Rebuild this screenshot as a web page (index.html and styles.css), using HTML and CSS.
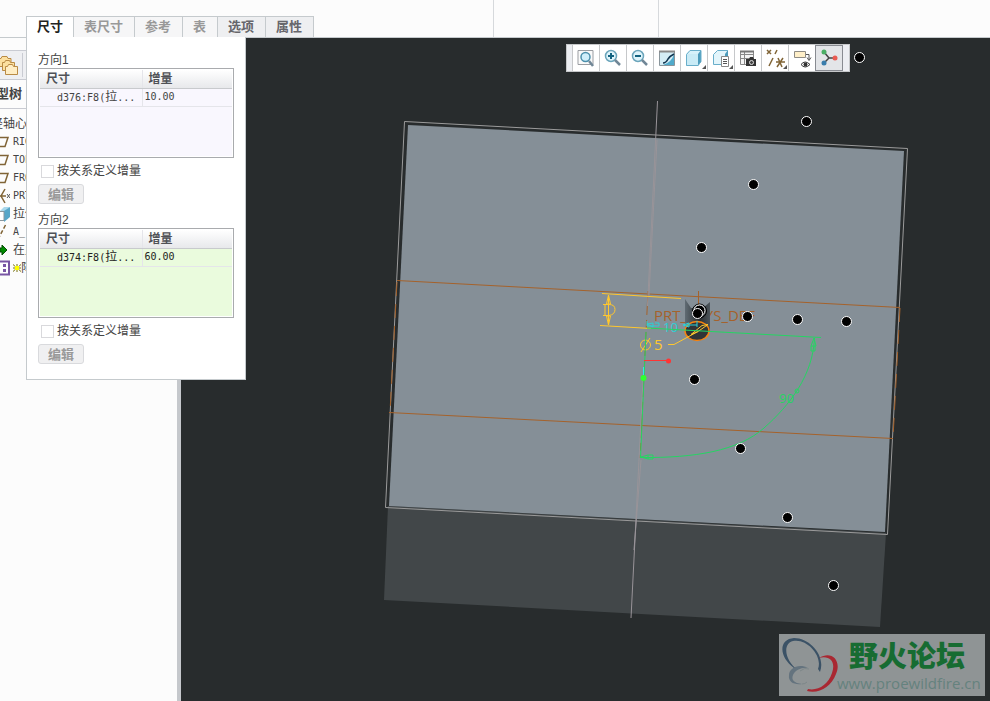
FILE: index.html
```html
<!DOCTYPE html>
<html lang="zh-CN">
<head>
<meta charset="utf-8">
<title>尺寸</title>
<link rel="stylesheet" href="styles.css">
</head>
<body>
<header class="ribbon">
  <nav class="tabs">
    <button class="tab active">尺寸</button>
    <button class="tab off">表尺寸</button>
    <button class="tab off">参考</button>
    <button class="tab off">表</button>
    <button class="tab">选项</button>
    <button class="tab">属性</button>
  </nav>
  <div class="group"></div>
  <div class="group"></div>
</header>
<main class="work">
  <aside class="side">
    <div class="side-tabs">
      <svg class="folders" width="24" height="24" viewBox="0 0 24 24"><g fill="#fce0a0" stroke="#b98b46"><path d="M-2 5.500h3l1-2h5l1 2h3v8h-13z"/><path d="M2.500 9.500h2l1-2h4l1 2h4v8h-12z"/><path d="M5.500 13.500h2l1-2h4l1 2h4v8h-12z" fill="#ffedc4"/></g><path d="M22.500 0v28" stroke="#c9cbd2"/></svg>
    </div>
    <h2 class="side-title">型树</h2>
    <ul class="tree">
      <li class="root">轻轴心</li>
      <li><svg width="10" height="16"><path d="M-3 12.500h8l3-9h-8" fill="none" stroke="#806436" stroke-width="1.500"/></svg>RIG</li>
      <li><svg width="10" height="16"><path d="M-3 12.500h8l3-9h-8" fill="none" stroke="#806436" stroke-width="1.500"/></svg>TOP</li>
      <li><svg width="10" height="16"><path d="M-3 12.500h8l3-9h-8" fill="none" stroke="#806436" stroke-width="1.500"/></svg>FRO</li>
      <li><svg width="10" height="16"><path d="M-2 8h8M5 1 1 8l4 7" fill="none" stroke="#806436" stroke-width="1.500"/><path d="m7 6 3 4m0-4-3 4" stroke="#555"/></svg>PRT</li>
      <li><svg width="10" height="16"><path d="M0 5 4 1h6L5 5z" fill="#a9d8ec"/><path d="m4 5 6-4v10l-6 5z" fill="#57a6c8"/><path d="M-1 5.500h5v9h-5" fill="#fff" stroke="#8b979e"/></svg><span class="han">拉伸</span></li>
      <li><svg width="10" height="16"><path d="M5.500 1-3 17" stroke="#806436" stroke-width="1.500" stroke-dasharray="4 2"/></svg>A_</li>
      <li><svg width="10" height="16"><path d="M0 6h2V3l5 5-5 5v-3H0z" fill="#008c00" stroke="#064f06"/></svg><span class="han">在此</span></li>
      <li><svg width="10" height="16"><path d="M-1 1.500H9v13H-1" fill="#fff" stroke="#7956a4" stroke-width="2"/><path d="M3 4h3v3H3zm0 5h3v3H3z" fill="#7956a4"/></svg><svg class="spark" width="8" height="10"><path d="M0 1.500 8 8.500M8 1.500 0 8.500M4 1v8M0 5h8" stroke="#77720b"/><path d="M2 3h4v4H2z" fill="#ff0"/></svg><span class="han">阵</span></li>
    </ul>
  </aside>
  <section class="viewport">
    <svg class="scene" viewBox="181 38 809 663" preserveAspectRatio="xMinYMin slice">
      <defs>
        <linearGradient id="bore"><stop offset="0" stop-color="#606b73"/><stop offset=".6" stop-color="#2b3033"/><stop offset="1" stop-color="#4c555b"/></linearGradient>
      </defs>
      <path d="m388 506-4 94 496 27 6-94z" fill="#424749"/>
      <path d="m408 125 496 26-19 381-496-26z" fill="#858f97"/>
      <g fill="none">
        <path d="m404.500 121.500 503 27-20 386-502-27z" stroke="#9b9b9b"/>
        <g stroke="#a5622b">
          <path d="m397 280.500 503 27M389 412.500l504 26"/>
          <path d="M397 282l-7 130M900 308l-7 130" stroke-dasharray="14 8"/>
          <path d="M648 291 640 458" stroke-dasharray="24 5 8 4"/>
          <path d="M698.500 291v15"/>
        </g>
        <path d="m657.500 101-10 205M643 380l-12 238" stroke="#999499"/>
        <path d="m657 140-8 155M641 460l-7 90" stroke="#999499"/>
      </g>
      <text x="654" y="321" class="note csys">PRT_CSYS_DEF</text>
      <path d="m685 299 6 9h12l7-6v30h-25z" fill="url(#bore)"/>
      <ellipse cx="697" cy="331" rx="12" ry="9.500" fill="#303437" stroke="#f58412" stroke-width="1.500"/>
      <g fill="none" stroke="#ffc72e">
        <path d="m602 293.500 79 5M600 325.500l51 3M608.500 295v30M608.500 295l-2 9h4zm0 30-2-9h4zM603 304.500h6q6 0 6 5t-6 6h-6m2-11v11"/>
        <path d="M668 344.500h6l24-13m0 0 10-7-6 1-11 9zM641 352l9-14"/>
        <circle cx="645.500" cy="345" r="5"/>
      </g>
      <text x="654" y="350" class="note gold">5</text>
      <path d="M647 321v5m0-2 6-1v4zm0 2h12v-3h-4M683 325h14m0-4v6m-14-2 6-2v4z" fill="none" stroke="#2dd0d5"/>
      <text x="663" y="332" class="note cyan">10</text>
      <g fill="none" stroke="#25d563">
        <path d="m647 328 174 9.500M646 332l-5.500 126"/>
        <path d="M814.500 338C813 375 790 405 764 428S695 458 641 457.500"/>
        <path d="m814 338-3 8h5zm-3 8v5h4v-5M641 457l7-2v4zm7-2h5v4h-5" />
        <circle cx="797" cy="391" r="2"/>
      </g>
      <text x="779" y="403" class="note green">90</text>
      <path d="M644 360.500h24" stroke="#ff3434"/><circle cx="668.500" cy="361" r="2.500" fill="#ff3434"/>
      <path d="M643.500 367v8" stroke="#2de5ee"/><circle cx="643.500" cy="378" r="3" fill="#30ff30"/>
      <g fill="#000" stroke="#fff">
        <circle cx="859.500" cy="57.500" r="5"/><circle cx="806.500" cy="121.500" r="5"/><circle cx="753.500" cy="184.500" r="5"/><circle cx="701.500" cy="247.500" r="5"/>
        <circle cx="699.500" cy="311" r="7" fill="none" stroke="#000"/><circle cx="699.500" cy="310.500" r="5.500"/><circle cx="697.500" cy="313.500" r="5"/>
        <circle cx="747.500" cy="316.500" r="5"/><circle cx="797.500" cy="319.500" r="5"/><circle cx="846.500" cy="321.500" r="5"/><circle cx="694.500" cy="379.500" r="5"/><circle cx="740.500" cy="448.500" r="5"/><circle cx="787.500" cy="517.500" r="5"/><circle cx="833.500" cy="585.500" r="5"/>
      </g>
    </svg>
    <div class="toolbar">
      <button aria-label="重新调整"><svg viewBox="0 0 24 24"><path d="M4 4.500h15v14H4z" fill="#fafafa" stroke="#9a9da2"/><circle cx="11.500" cy="11" r="4.500" fill="#cfeefa" stroke="#4b8fab" stroke-width="1.500"/><path d="m15 15 4 5" stroke="#718797" stroke-width="2.500"/></svg></button>
      <button aria-label="放大"><svg viewBox="0 0 24 24"><circle cx="10" cy="10" r="5.500" fill="#dff4fb" stroke="#6ba5bb" stroke-width="1.500"/><path d="M7 10h6M10 7v6" stroke="#126280" stroke-width="2"/><path d="m14 14 5 5" stroke="#718797" stroke-width="2.500"/></svg></button>
      <button aria-label="缩小"><svg viewBox="0 0 24 24"><circle cx="10" cy="10" r="5.500" fill="#dff4fb" stroke="#6ba5bb" stroke-width="1.500"/><path d="M7 10h6" stroke="#126280" stroke-width="2"/><path d="m14 14 5 5" stroke="#718797" stroke-width="2.500"/></svg></button>
      <button aria-label="重画"><svg viewBox="0 0 24 24"><path d="M4.500 5.500h15v14h-15z" fill="#d4edf6" stroke="#89959b"/><path d="M19 8v11H8q9-3 11-11" fill="#50aacb"/><path d="M4 5.500h16" stroke="#898989" stroke-width="2"/><path d="M8 17q3 0 5-4 2-3 6-5" fill="none" stroke="#10344f" stroke-width="1.500"/></svg></button>
      <button aria-label="显示样式"><svg viewBox="0 0 24 24"><path d="m4 8 4-4h11l-3 4z" fill="#d6f1fa"/><path d="M4 8h12v12H4z" fill="#c9ebf6"/><path d="m16 8 3-4v12l-3 4z" fill="#4c9bbb"/><path d="m4.500 8.500 3.500-4h11v11l-3 4H4.500z" fill="none" stroke="#69aeca"/><path d="M24 19v4h-4z" fill="#555"/></svg></button>
      <button aria-label="已命名视图"><svg viewBox="0 0 24 24"><path d="m4.500 8.500 4-4h10v3l-3 3v8h-11z" fill="#e3f5fb" stroke="#69aeca"/><path d="m16 8 3-4v6h-3z" fill="#4c9bbb"/><path d="M12.500 10.500h7v10h-7z" fill="#fff" stroke="#888"/><path d="M14 13.500h4m-4 2h4m-4 2h4" stroke="#555"/><path d="M24 19v4h-4z" fill="#555"/></svg></button>
      <button aria-label="视图管理器"><svg viewBox="0 0 24 24"><path d="M4.500 5.500h13v13h-13zM4 8.500h14M4 12.500h14M8.500 5v13" fill="#f4f4f4" stroke="#888"/><path d="M4 5.500h14" stroke="#777" stroke-width="2"/><path d="M10 13h3l1-2h3l1 2h2v7H10z" fill="#333"/><circle cx="15.500" cy="16.500" r="2" fill="#444" stroke="#ddd"/></svg></button>
      <button aria-label="基准显示"><svg viewBox="0 0 24 24"><path d="m4 4 4 4m0-4L4 8m10-4-2 4m-2 4-4 8m7-4h9m-7-4 4 9m1-9-6 9" stroke="#806436" stroke-width="1.500" fill="none"/><path d="M24 19v4h-4z" fill="#555"/></svg></button>
      <button aria-label="注释显示"><svg viewBox="0 0 24 24"><path d="M4.500 5.500h11v6h-11z" fill="#ffefc8" stroke="#8e8b84"/><path d="M16 8.500h3v5m-2-2 2 3 2-3" fill="none" stroke="#555"/><path d="M11 18.500q4-5 9 0-5 5-9 0z" fill="#fff" stroke="#333"/><circle cx="15.500" cy="18.500" r="2" fill="#333"/></svg></button>
      <button class="pressed" aria-label="旋转中心"><svg viewBox="0 0 24 24"><path d="m7 6 5 6-5 5m5-5h7" fill="none" stroke="#444" stroke-width="1.500"/><circle cx="7" cy="6" r="2.500" fill="#4bae65"/><circle cx="7" cy="17" r="2.500" fill="#397dac"/><circle cx="18" cy="12" r="2.500" fill="#e95b53"/></svg></button>
    </div>
    <div class="mark">
      <svg viewBox="0 0 60 62">
        <path d="M41 38C47 22 31 4 15 4 0 5-1 22 15 34l4 2C6 27 3 10 14 7 28 4 44 22 39 35z" fill="#3b5266"/>
        <path d="M29 34c-9-5-19 0-19 7-1 7 5 10 13 9-8-1-11-4-9-9s9-8 15-7z" fill="#64737e"/>
        <path d="M21 37q5-4 9-2m-7 15q3 0 5-2" fill="none" stroke="#7d8789"/>
        <path d="M40 24C52 16 63 26 57 40 52 53 40 60 28 57l1-2c10 2 20-4 24-16 4-11-2-18-13-15z" fill="#a92832"/>
      </svg>
      <div><strong>野火论坛</strong><span>www.proewildfire.cn</span></div>
    </div>
  </section>
</main>
<section class="panel">
  <h3>方向1</h3>
  <div class="box lilac"><table>
    <thead><tr><th>尺寸</th><th>增量</th></tr></thead>
    <tbody><tr><td>d376:F8(<span class="han">拉</span>...</td><td>10.00</td></tr></tbody>
  </table></div>
  <label class="check"><input type="checkbox">按关系定义增量</label>
  <button class="edit" disabled>编辑</button>
  <h3>方向2</h3>
  <div class="box lime"><table>
    <thead><tr><th>尺寸</th><th>增量</th></tr></thead>
    <tbody><tr><td>d374:F8(<span class="han">拉</span>...</td><td>60.00</td></tr></tbody>
  </table></div>
  <label class="check"><input type="checkbox">按关系定义增量</label>
  <button class="edit" disabled>编辑</button>
</section>
</body>
</html>
```
FILE: styles.css
```css
* { box-sizing: border-box; }
body {
  margin: 0;
  height: 100vh;
  display: flex;
  flex-direction: column;
  overflow: hidden;
  position: relative;
  background: #fcfcfc;
  color: #444;
  font: 12px/18px "Liberation Sans", "Noto Sans CJK SC", sans-serif;
}
button { font: inherit; color: inherit; padding: 0; margin: 0; }
.ribbon {
  height: 38px;
  flex: none;
  display: flex;
  border-bottom: 1px solid #c5cacd;
}
.tabs {
  display: flex;
  align-items: flex-end;
  width: 494px;
  padding-left: 26px;
  border-right: 1px solid #d6d9dc;
}
.group { width: 165px; border-right: 1px solid #d6d9dc; }
.group:last-child { flex: 1; border: 0; }
.tab {
  height: 21px;
  padding: 0 11px 0 10px;
  border: 1px solid #c5cacd;
  border-left-width: 0;
  border-bottom: 0;
  background: #eeeff1;
  color: #66666b;
  font-size: 13px;
  font-weight: 700;
  line-height: 18px;
}
.tab.off { background: #f6f6f7; color: #999; }
.tab.active { background: #fff; color: #222; border-left-width: 1px; padding-right: 10px; }

.work { flex: 1; display: flex; min-height: 0; }
.side {
  width: 181px;
  flex: none;
  border-right: 4px solid #c5c8cc;
  overflow: hidden;
}
.side-tabs {
  height: 30px;
  margin-top: 12px;
  border: 1px solid #c9cbd2;
  border-left: 0;
  background: #eeeff2;
  display: flex;
}
.folders { margin-top: 2px; }
.side-title {
  margin: 0;
  height: 29px;
  border-bottom: 1px solid #c9cbd2;
  font-size: 13px;
  line-height: 28px;
  text-indent: -4px;
}
.tree {
  list-style: none;
  margin: 0;
  padding: 6px 0 0;
  font: 10px/18px "DejaVu Sans Mono", "Noto Sans CJK SC", monospace;
}
.tree li { display: flex; align-items: center; height: 18px; gap: 3px; white-space: nowrap; }
.tree .root { font-size: 12px; text-indent: -9px; }
.han { font-size: 12px; }
.spark { margin-right: -3px; }

.viewport { flex: 1; position: relative; background: #282c2d; overflow: hidden; min-width: 0; }
.scene { display: block; width: 100%; height: 100%; }
.note { font: 15px "Open Sans", sans-serif; }
.csys { fill: #a5622b; }
.gold { fill: #ffc72e; }
.cyan { fill: #2dd0d5; font-size: 13px; }
.green { fill: #25d563; font-size: 13px; }

.toolbar {
  position: absolute;
  top: 6px;
  left: 385px;
  display: flex;
  height: 28px;
  padding: 0 6px 0 5px;
  border: 1px solid #c6c8ca;
  background: #eceef2;
}
.toolbar button {
  width: 27px;
  border: 0;
  border-left: 1px solid #c6c8ca;
  background: #fff;
  display: flex;
  align-items: center;
  justify-content: center;
}
.toolbar svg { width: 24px; height: 24px; }
.toolbar .pressed { width: 28px; border: 1px solid #888b91; background: #e3e5e8; }

.mark {
  position: absolute;
  right: 5px;
  bottom: 5px;
  width: 206px;
  height: 62px;
  display: flex;
  background: #8f9495;
}
.mark svg { width: 60px; flex: none; }
.mark div { display: flex; flex-direction: column; white-space: nowrap; margin-left: -2px; }
.mark strong { margin-left: 12px; color: #176c32; font: 900 29px/40px "Noto Sans CJK SC", sans-serif; }
.mark span { color: #65827e; font: 15px/18px "Open Sans", sans-serif; }

.panel {
  position: absolute;
  top: 37px;
  left: 26px;
  width: 220px;
  height: 343px;
  padding: 15px 11px 0;
  background: #fff;
  border: 1px solid #c5cacd;
  border-top: 0;
}
.panel h3 { margin: 0; font-size: 12px; font-weight: 400; line-height: 16px; }
.box { height: 90px; width: 196px; border: 1px solid #a9abae; padding: 1px; background-clip: content-box; }
.lilac { background-color: #f9f7fe; }
.lime { background-color: #eafbdd; color: #222; }
.box table { width: 100%; border-collapse: collapse; table-layout: fixed; }
.box thead { color: #505257; background: linear-gradient(#fff, #e6e7ea); }
.box th {
  height: 18px;
  padding: 1px 6px 0;
  text-align: left;
  font-size: 12px;
  line-height: 17px;
  border-bottom: 1px solid #c8cacd;
}
.box th + th, .box td + td { border-left: 1px solid #e5e5ea; }
.box th:first-child { width: 102px; }
.box td {
  vertical-align: top;
  padding: 0 3px;
  font: 10px/16px "DejaVu Sans Mono", "Noto Sans CJK SC", monospace;
  white-space: nowrap;
  border-bottom: 1px solid #e5e5ea;
}
.box td:first-child { padding-left: 17px; }
.box td + td { padding-left: 2px; }
.han { line-height: 16px; }
.check { display: flex; align-items: center; height: 26px; gap: 3px; }
.check input {
  appearance: none;
  width: 13px;
  height: 13px;
  margin: 0 0 0 3px;
  border: 1px solid #d9d9dc;
  background: #fff;
}
.edit {
  display: block;
  width: 46px;
  height: 20px;
  margin-bottom: 8px;
  border: 1px solid #d9dadd;
  border-radius: 3px;
  background: #f0f0f1;
  color: #999;
  font-size: 13px;
  font-weight: 700;
  line-height: 17px;
}
```
